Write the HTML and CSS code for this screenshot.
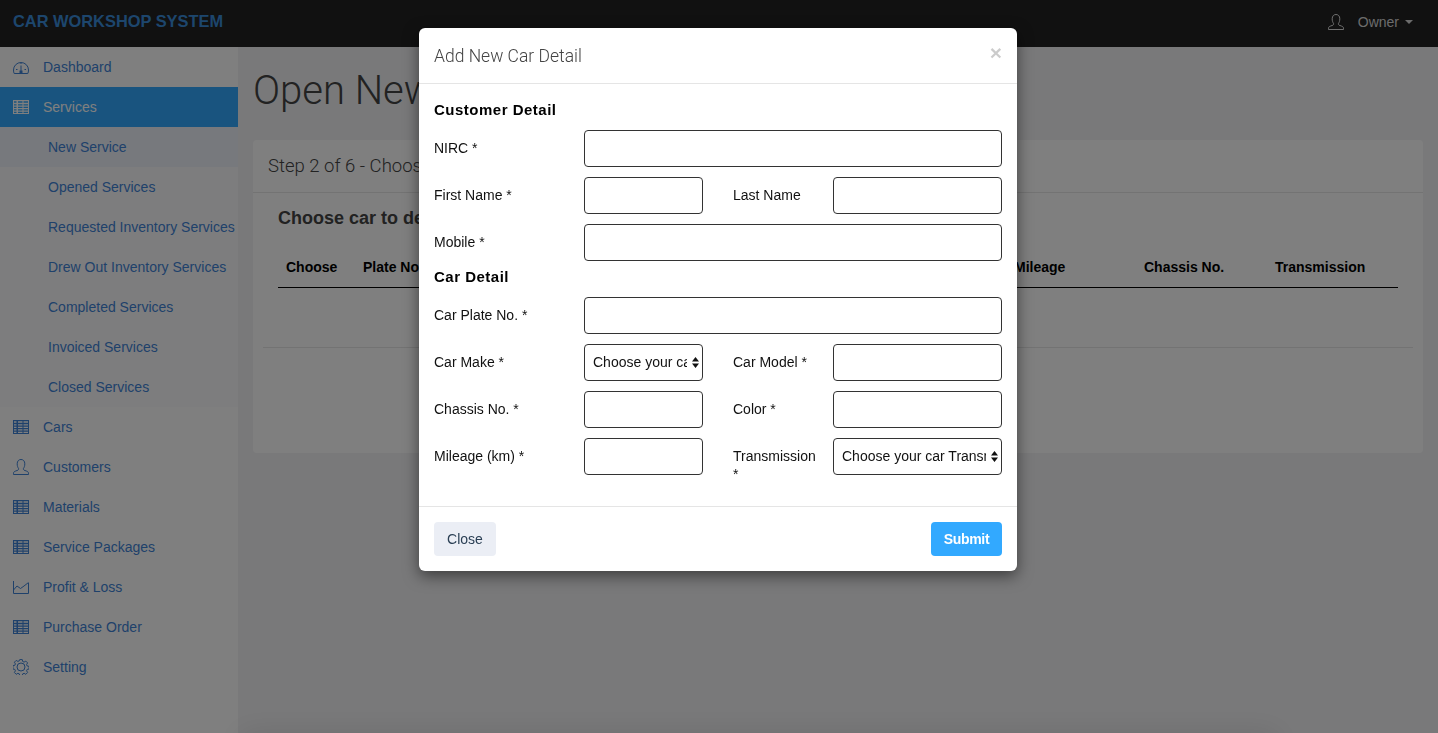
FILE: index.html
```html
<!DOCTYPE html>
<html lang="en">
<head>
<meta charset="utf-8">
<title>Car Workshop System</title>
<link rel="stylesheet" href="styles.css">
</head>
<body>
<svg class="sprite" width="0" height="0" aria-hidden="true">
  <symbol id="i-table" viewBox="0 0 16 14">
    <path fill="currentColor" fill-rule="evenodd" d="M0 0h16v14H0z
      M1 1.200h2.500v1.600H1z M5 1.200h4.500v1.600H5z M10.500 1.200H15v1.600h-4.500z
      M1 4.200h2.500v1.300H1z M5 4.200h4.500v1.300H5z M10.500 4.200H15v1.300h-4.500z
      M1 6.700h2.500V8H1z M5 6.700h4.500V8H5z M10.500 6.700H15V8h-4.500z
      M1 9.200h2.500v1.300H1z M5 9.200h4.500v1.300H5z M10.500 9.200H15v1.300h-4.500z
      M1 11.700h2.500V13H1z M5 11.700h4.500V13H5z M10.500 11.700H15V13h-4.500z"/>
  </symbol>
  <symbol id="i-gauge" viewBox="0 0 16 14">
    <path fill="none" stroke="currentColor" stroke-width="1" d="M1.200 13.500C.7 12.600.5 11.400.5 10a7.500 7.500 0 0 1 15 0c0 1.400-.2 2.600-.7 3.500zM3 9.500h1.500M11.500 9.500H13M8 3v1"/>
    <path fill="currentColor" d="M7.500 5.500h1v5h1v2.500h-3v-2.500h1z"/>
  </symbol>
  <symbol id="i-user" viewBox="0 0 16 16">
    <path fill="none" stroke="currentColor" stroke-width="1" d="M.5 15.500v-1.300c0-1.200 1-1.800 2.200-2.200l2.200-.8c.6-.3.8-.9.7-1.600C4.800 8.400 4.200 7 4.200 4.800 4.200 2 5.800.5 8 .5s3.800 1.500 3.800 4.300c0 2.200-.6 3.600-1.400 4.800-.1.7.1 1.300.7 1.600l2.200.8c1.200.4 2.200 1 2.200 2.200v1.300z"/>
  </symbol>
  <symbol id="i-chart" viewBox="0 0 16 14">
    <path fill="none" stroke="currentColor" stroke-width="1" d="M.5 1v12.500h15V3M.5 10l3.500-4 3.500 2.500L11 6l4.500-3.500"/>
  </symbol>
  <symbol id="i-gear" viewBox="0 0 16 16">
    <circle cx="8" cy="8" r="4" fill="none" stroke="currentColor"/>
    <path fill="none" stroke="currentColor" stroke-width="1" d="M6.700.6h2.600l.4 1.900 1.400.6 1.700-1 1.800 1.800-1 1.700.6 1.400 1.900.4v2.600l-1.900.4-.6 1.400 1 1.700-1.800 1.800-1.700-1-1.400.6-.4 1.900H6.700l-.4-1.900-1.400-.6-1.700 1-1.800-1.800 1-1.700-.6-1.400-1.900-.4V6.700l1.900-.4.6-1.400-1-1.700 1.800-1.800 1.700 1 1.400-.6z"/>
  </symbol>
</svg>

<div class="app">
  <header class="topbar">
    <a class="brand">CAR WORKSHOP SYSTEM</a>
    <div class="account">
      <svg class="account-icon"><use href="#i-user"/></svg>
      <span>Owner</span>
      <span class="caret"></span>
    </div>
  </header>
  <div class="shell">
    <nav class="sidebar">
      <a class="nav-item"><svg class="icon"><use href="#i-gauge"/></svg>Dashboard</a>
      <a class="nav-item active"><svg class="icon"><use href="#i-table"/></svg>Services</a>
      <div class="subnav">
        <a class="sub-item current">New Service</a>
        <a class="sub-item">Opened Services</a>
        <a class="sub-item">Requested Inventory Services</a>
        <a class="sub-item">Drew Out Inventory Services</a>
        <a class="sub-item">Completed Services</a>
        <a class="sub-item">Invoiced Services</a>
        <a class="sub-item">Closed Services</a>
      </div>
      <a class="nav-item"><svg class="icon"><use href="#i-table"/></svg>Cars</a>
      <a class="nav-item"><svg class="icon"><use href="#i-user"/></svg>Customers</a>
      <a class="nav-item"><svg class="icon"><use href="#i-table"/></svg>Materials</a>
      <a class="nav-item"><svg class="icon"><use href="#i-table"/></svg>Service Packages</a>
      <a class="nav-item"><svg class="icon"><use href="#i-chart"/></svg>Profit &amp; Loss</a>
      <a class="nav-item"><svg class="icon"><use href="#i-table"/></svg>Purchase Order</a>
      <a class="nav-item"><svg class="icon"><use href="#i-gear"/></svg>Setting</a>
    </nav>
    <main class="main">
      <h1 class="page-title">Open New</h1>
      <section class="card">
        <div class="card-head">Step 2 of 6 - Choose</div>
        <div class="card-body">
          <h2 class="card-title">Choose car to de</h2>
          <table class="cars">
            <thead>
              <tr>
                <th class="c-choose">Choose</th>
                <th class="c-plate">Plate No.</th>
                <th class="c-make"></th>
                <th class="c-model"></th>
                <th class="c-color"></th>
                <th class="c-mileage">Mileage</th>
                <th class="c-chassis">Chassis No.</th>
                <th>Transmission</th>
              </tr>
            </thead>
          </table>
        </div>
        <div class="card-foot"></div>
      </section>
    </main>
  </div>
</div>

<div class="backdrop"></div>

<div class="modal">
  <div class="modal-head">
    <h3 class="modal-title">Add New Car Detail</h3>
    <span class="modal-x">×</span>
  </div>
  <div class="modal-body">
    <h4 class="section-title">Customer Detail</h4>
    <div class="form-grid">
      <label class="lbl">NIRC *</label>
      <input class="field wide" type="text">
      <label class="lbl">First Name *</label>
      <input class="field" type="text">
      <label class="lbl lbl-2">Last Name</label>
      <input class="field" type="text">
      <label class="lbl">Mobile *</label>
      <input class="field wide" type="text">
    </div>
    <h4 class="section-title second">Car Detail</h4>
    <div class="form-grid">
      <label class="lbl">Car Plate No. *</label>
      <input class="field wide" type="text">
      <label class="lbl">Car Make *</label>
      <div class="select-wrap">
        <select class="field select"><option>Choose your car Make</option></select>
        <svg class="updown" viewBox="0 0 7 11"><path fill="currentColor" d="M3.500 0 7 4.500H0zM3.500 11 0 6.500h7z"/></svg>
      </div>
      <label class="lbl lbl-2">Car Model *</label>
      <input class="field" type="text">
      <label class="lbl">Chassis No. *</label>
      <input class="field" type="text">
      <label class="lbl lbl-2">Color *</label>
      <input class="field" type="text">
      <label class="lbl">Mileage (km) *</label>
      <input class="field" type="text">
      <label class="lbl lbl-2">Transmission *</label>
      <div class="select-wrap">
        <select class="field select"><option>Choose your car Transmission</option></select>
        <svg class="updown" viewBox="0 0 7 11"><path fill="currentColor" d="M3.500 0 7 4.500H0zM3.500 11 0 6.500h7z"/></svg>
      </div>
    </div>
  </div>
  <div class="modal-foot">
    <button class="btn btn-close" type="button">Close</button>
    <button class="btn btn-submit" type="button">Submit</button>
  </div>
</div>
</body>
</html>
```

FILE: styles.css
```css
* { box-sizing: border-box; }
html, body { height: 100%; }
body {
  margin: 0;
  overflow: hidden;
  font-family: "Liberation Sans", Arial, sans-serif;
  font-size: 14px;
  color: #000;
  background: #f2f3f5;
}
.sprite { position: absolute; }

.app { display: flex; flex-direction: column; height: 100vh; }

.topbar {
  flex: 0 0 47px;
  display: flex;
  align-items: center;
  justify-content: space-between;
  padding: 0 25px 4px 13px;
  background: #222;
}
.brand { color: #3a8ddb; font-size: 16.4px; font-weight: 700; }
.account { display: flex; align-items: center; color: #d8d8d8; }
.account-icon { width: 16px; height: 16px; margin-right: 14px; color: #e0e0e0; }
.caret {
  margin-left: 6px;
  border-top: 4px solid #d8d8d8;
  border-left: 4px solid transparent;
  border-right: 4px solid transparent;
}

.shell { flex: 1; display: flex; min-height: 0; }

.sidebar { flex: 0 0 238px; background: #fff; }
.nav-item {
  display: flex;
  align-items: center;
  height: 40px;
  padding-left: 13px;
  color: #3f83d6;
}
.nav-item.active { background: #32a9ff; color: #fff; }
.icon { width: 16px; height: 16px; margin-right: 14px; flex: none; }
.subnav { background: #fbfbfd; }
.sub-item {
  display: flex;
  align-items: center;
  height: 40px;
  padding-left: 48px;
  color: #3f83d6;
  white-space: nowrap;
}
.sub-item.current { background: #eef2fb; }

.main { flex: 1; min-width: 0; padding: 0 15px; }
.page-title {
  margin: 0;
  height: 93px;
  padding-top: 18px;
  font-family: Roboto, "Liberation Sans", sans-serif;
  font-size: 40px;
  line-height: 52px;
  font-weight: 300;
  color: #444;
}
.card { height: 313px; background: #fff; border-radius: 4px; }
.card-head {
  height: 53px;
  padding: 16px 15px 0;
  border-bottom: 1px solid #e6e6e6;
  font-family: Roboto, "Liberation Sans", sans-serif;
  font-size: 18.5px;
  font-weight: 300;
  line-height: 21px;
  color: #444;
}
.card-body { height: 154px; padding: 15px 25px 0; }
.card-title { margin: 0; font-size: 18px; line-height: 20px; font-weight: 700; color: #444; }
.cars {
  width: 100%;
  margin-top: 19px;
  border-collapse: collapse;
  table-layout: fixed;
}
.cars th {
  height: 40px;
  padding: 1px 8px 0;
  border-bottom: 1px solid #000;
  text-align: left;
  font-size: 14px;
  font-weight: 700;
}
.c-choose { width: 77px; }
.c-plate { width: 160px; }
.c-make, .c-model { width: 164px; }
.c-color { width: 163px; }
.c-mileage { width: 130px; }
.c-chassis { width: 131px; }
.card-foot { margin: 0 10px; border-top: 1px solid #e6e6e6; }

.backdrop {
  position: fixed;
  inset: 0;
  overflow: hidden;
  background: rgba(0, 0, 0, .5);
}
.backdrop::after {
  content: "";
  position: absolute;
  left: 240px;
  right: 160px;
  bottom: -30px;
  height: 30px;
  box-shadow: 0 0 30px rgba(0, 0, 0, .1);
}

.modal {
  position: absolute;
  top: 28px;
  left: 419px;
  width: 598px;
  background: #fff;
  border-radius: 6px;
  box-shadow: 0 5px 15px rgba(0, 0, 0, .5);
}
.modal-head {
  display: flex;
  justify-content: space-between;
  height: 56px;
  padding: 15px;
  border-bottom: 1px solid #e5e5e5;
}
.modal-title {
  margin: 0;
  font-family: Roboto, "Liberation Sans", sans-serif;
  font-size: 17.5px;
  line-height: 26px;
  font-weight: 300;
  color: #444;
}
.modal-x {
  margin-top: -1px;
  font-size: 21px;
  line-height: 21px;
  font-weight: 700;
  color: #000;
  opacity: .2;
}
.modal-body { padding: 15px 15px 31px; }
.section-title {
  margin: 3px 0 12px;
  font-size: 15px;
  line-height: 16px;
  font-weight: 700;
  letter-spacing: .5px;
  color: #000;
}
.section-title.second { margin-top: 8px; }
.form-grid {
  display: grid;
  grid-template-columns: 150px 119px 130px 169px;
  grid-auto-rows: 37px;
  row-gap: 10px;
}
.lbl { padding-top: 9px; line-height: 18px; color: #111; }
.lbl-2 { padding: 9px 15px 0 30px; }
.field {
  display: block;
  width: 100%;
  height: 37px;
  padding: 0 8px;
  border: 1px solid #333;
  border-radius: 4px;
  background: #fff;
  font-family: inherit;
  font-size: 14px;
  color: #111;
}
.wide { grid-column: 2 / 5; }
.select-wrap { position: relative; }
.select { appearance: none; padding: 0 15px 2px 8px; }
.updown {
  position: absolute;
  top: 13px;
  right: 4px;
  width: 7px;
  height: 11px;
  color: #111;
}
.modal-foot {
  display: flex;
  justify-content: space-between;
  padding: 15px;
  border-top: 1px solid #e5e5e5;
}
.btn {
  height: 34px;
  border: 0;
  border-radius: 4px;
  font-family: inherit;
  font-size: 14px;
}
.btn-close { width: 62px; background: #ebeef5; color: #2a3f54; }
.btn-submit { width: 71px; background: #32a9ff; color: #fff; font-weight: 700; letter-spacing: -.3px; }
```
